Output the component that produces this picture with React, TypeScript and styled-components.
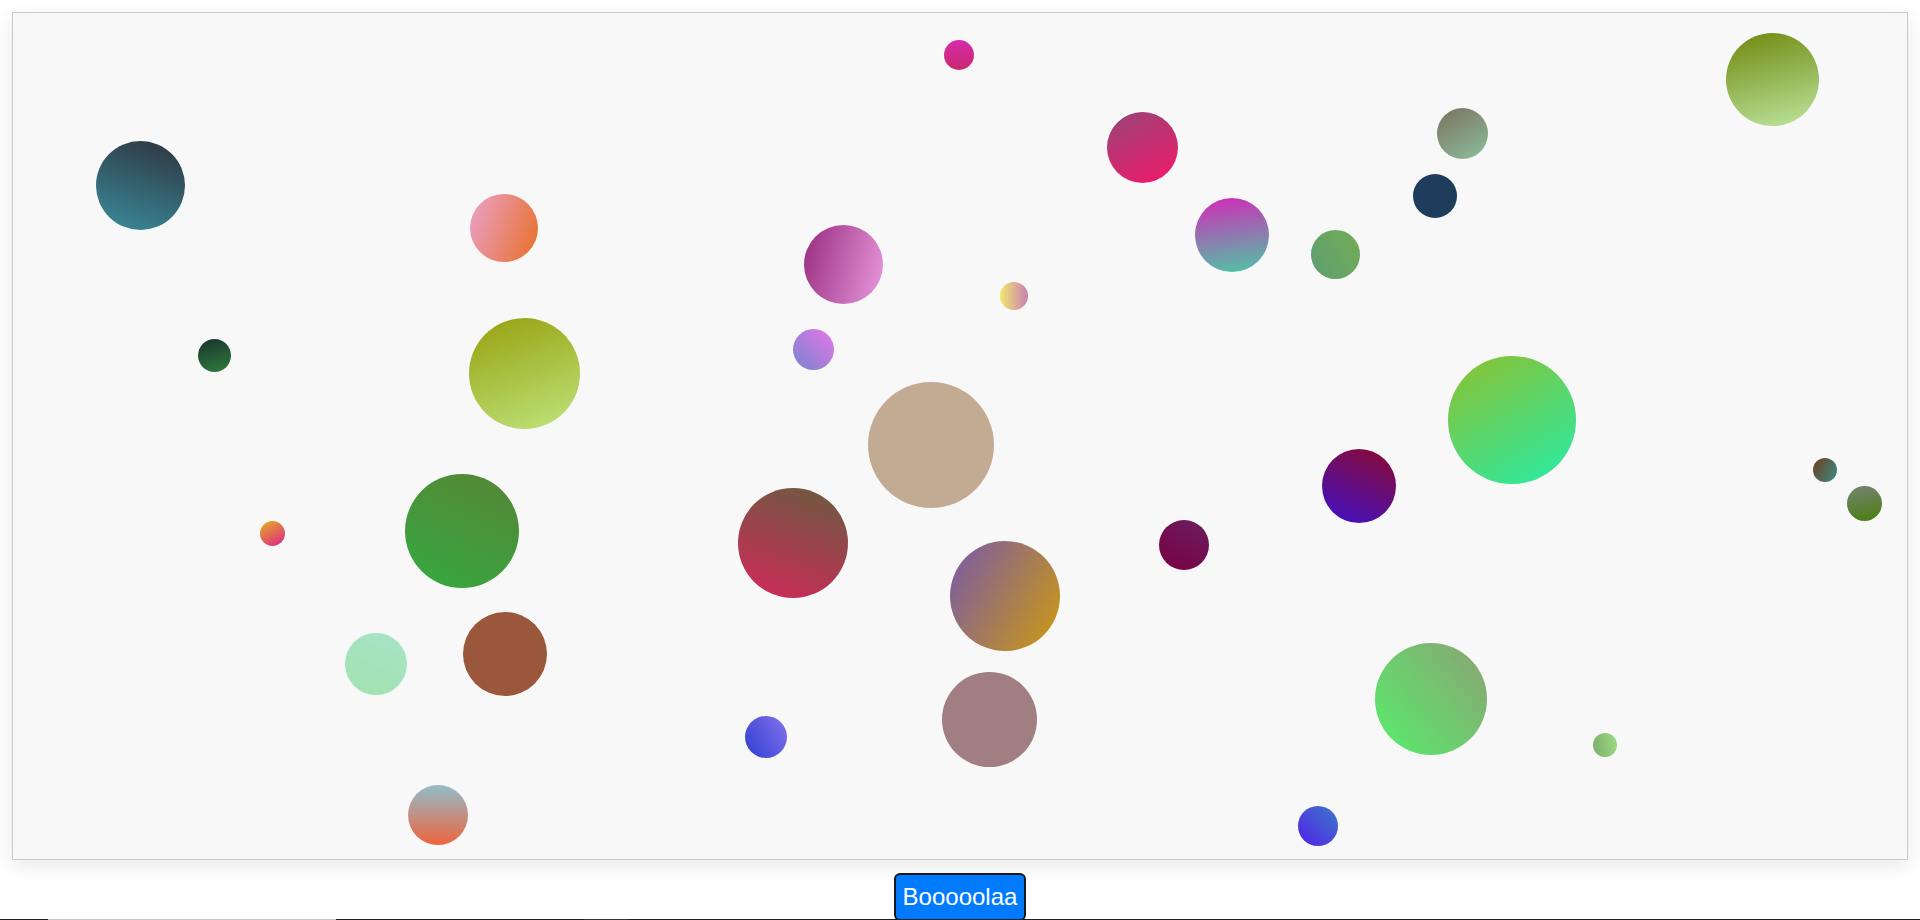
import * as React from "react";
import styled, { createGlobalStyle } from "styled-components";

// canvas padding-box origin on the page (12px page padding + 1px border)
const ORIGIN = 13;

type Bubble = { x: number; y: number; d: number; fill: string };

// centre x, centre y, diameter — measured in page coordinates
const BUBBLES: Bubble[] = [
  { x: 140.5, y: 185.5, d: 89, fill: "linear-gradient(200deg, #2e333d, #3a8d9d)" },
  { x: 214.5, y: 355, d: 33, fill: "linear-gradient(165deg, #17352c, #317c3d)" },
  { x: 504, y: 228, d: 68, fill: "linear-gradient(110deg, #eaa2cc, #e86f26)" },
  { x: 524.5, y: 373.5, d: 111, fill: "linear-gradient(160deg, #96a00e, #bee57c)" },
  { x: 959, y: 55, d: 30, fill: "linear-gradient(180deg, #d52bab, #c9286c)" },
  { x: 1142, y: 147.5, d: 71, fill: "linear-gradient(155deg, #984577, #f2186b)" },
  { x: 1232, y: 235, d: 74, fill: "linear-gradient(172deg, #d22ab9, #4ec6a6)" },
  { x: 843.5, y: 264, d: 79, fill: "linear-gradient(105deg, #982b7e, #e89ade)" },
  { x: 1014, y: 295.5, d: 28, fill: "linear-gradient(90deg, #f3e66e, #c682b2)" },
  { x: 813.5, y: 349, d: 41, fill: "linear-gradient(45deg, #7884d0, #e477e5)" },
  { x: 931, y: 445, d: 126, fill: "#c3aa92" },
  { x: 1772.5, y: 79.5, d: 93, fill: "linear-gradient(165deg, #6f880e, #bde59e)" },
  { x: 1462.5, y: 133.5, d: 51, fill: "linear-gradient(150deg, #7b725e, #8cbe9e)" },
  { x: 1435, y: 195.5, d: 44, fill: "#1f3c5c" },
  { x: 1335.5, y: 254.5, d: 49, fill: "linear-gradient(60deg, #5e9e72, #72ad56)" },
  { x: 1512, y: 420, d: 128, fill: "linear-gradient(150deg, #8ebf2e, #27eda9)" },
  { x: 272.5, y: 533.5, d: 25, fill: "linear-gradient(150deg, #e5b21e, #dc1f8a)" },
  { x: 462, y: 531, d: 114, fill: "linear-gradient(205deg, #578535, #35a941)" },
  { x: 376, y: 663.5, d: 62, fill: "linear-gradient(200deg, #a7e4c8, #a1e2ae)" },
  { x: 505, y: 654, d: 84, fill: "#9a573b" },
  { x: 438, y: 815, d: 60, fill: "linear-gradient(180deg, #92bdca, #ee643e)" },
  { x: 793, y: 543, d: 110, fill: "linear-gradient(200deg, #685d3f, #d2275a)" },
  { x: 1005, y: 596, d: 110, fill: "linear-gradient(120deg, #7858aa, #ce9b0e)" },
  { x: 1184, y: 545, d: 50, fill: "linear-gradient(210deg, #6a1e5e, #7a0044)" },
  { x: 766, y: 736.5, d: 42, fill: "linear-gradient(60deg, #2f3fd0, #8472ee)" },
  { x: 989.5, y: 719.5, d: 95, fill: "#a07e82" },
  { x: 1358.5, y: 486, d: 74, fill: "linear-gradient(205deg, #8b0a2e, #3f10ca)" },
  { x: 1825, y: 470, d: 24, fill: "linear-gradient(120deg, #713b22, #3a8e82)" },
  { x: 1864.5, y: 503.5, d: 35, fill: "linear-gradient(170deg, #758575, #4a7c0e)" },
  { x: 1431, y: 699, d: 112, fill: "linear-gradient(230deg, #8ba274, #57ee6b)" },
  { x: 1604.5, y: 745, d: 24, fill: "linear-gradient(80deg, #7dad6d, #9bdb80)" },
  { x: 1317.5, y: 826, d: 40, fill: "linear-gradient(45deg, #511fe6, #3b7acb)" },
];

const GlobalStyle = createGlobalStyle`
  html, body {
    margin: 0;
    padding: 0;
    background: #ffffff;
    overflow: hidden;
  }
  body {
    font-family: "Liberation Sans", Arial, sans-serif;
  }
`;

const Page = styled.div`
  display: flex;
  flex-direction: column;
  padding: 12px 12px 0;
  height: 920px;
  box-sizing: border-box;
  overflow: hidden;
`;

const Canvas = styled.div`
  position: relative;
  height: 848px;
  box-sizing: border-box;
  border: 1px solid #c8c8c8;
  background: #f8f8f8;
  box-shadow: 0 6px 18px rgba(0, 0, 0, 0.09);
  overflow: hidden;
  flex-shrink: 0;
`;

const Dot = styled.span<{ $x: number; $y: number; $d: number; $fill: string }>`
  position: absolute;
  left: ${(p) => p.$x - p.$d / 2 - ORIGIN}px;
  top: ${(p) => p.$y - p.$d / 2 - ORIGIN}px;
  width: ${(p) => p.$d}px;
  height: ${(p) => p.$d}px;
  border-radius: 50%;
  background: ${(p) => p.$fill};
`;

const Controls = styled.div`
  display: flex;
  justify-content: center;
  align-items: flex-start;
  margin: 13px -12px 0;
  height: 46px;
  flex-shrink: 0;
`;

const ActionButton = styled.button`
  font-family: "Liberation Sans", Arial, sans-serif;
  font-size: 24px;
  line-height: normal;
  padding: 8px 7px;
  border: 2px solid #1a1a1a;
  border-radius: 6px;
  background: #007bff;
  color: #ffffff;
  cursor: pointer;
`;

const Tray = styled.div`
  display: flex;
  margin: 0 -12px;
  height: 1px;
  background: #202020;
  flex-shrink: 0;
`;

const TraySlot = styled.div<{ $from: number; $to: number; $tone: string }>`
  margin-left: ${(p) => p.$from}px;
  width: ${(p) => p.$to - p.$from}px;
  background: ${(p) => p.$tone};
`;

export default function App() {
  return (
    <>
      <GlobalStyle />
      <Page>
        <Canvas>
          {BUBBLES.map((b, i) => (
            <Dot key={i} $x={b.x} $y={b.y} $d={b.d} $fill={b.fill} />
          ))}
        </Canvas>
        <Controls>
          <ActionButton type="button">Booooolaa</ActionButton>
        </Controls>
        <Tray>
          <TraySlot $from={48} $to={336} $tone="#c6c6c6" />
          <TraySlot $from={248} $to={292} $tone="#363636" />
        </Tray>
      </Page>
    </>
  );
}
